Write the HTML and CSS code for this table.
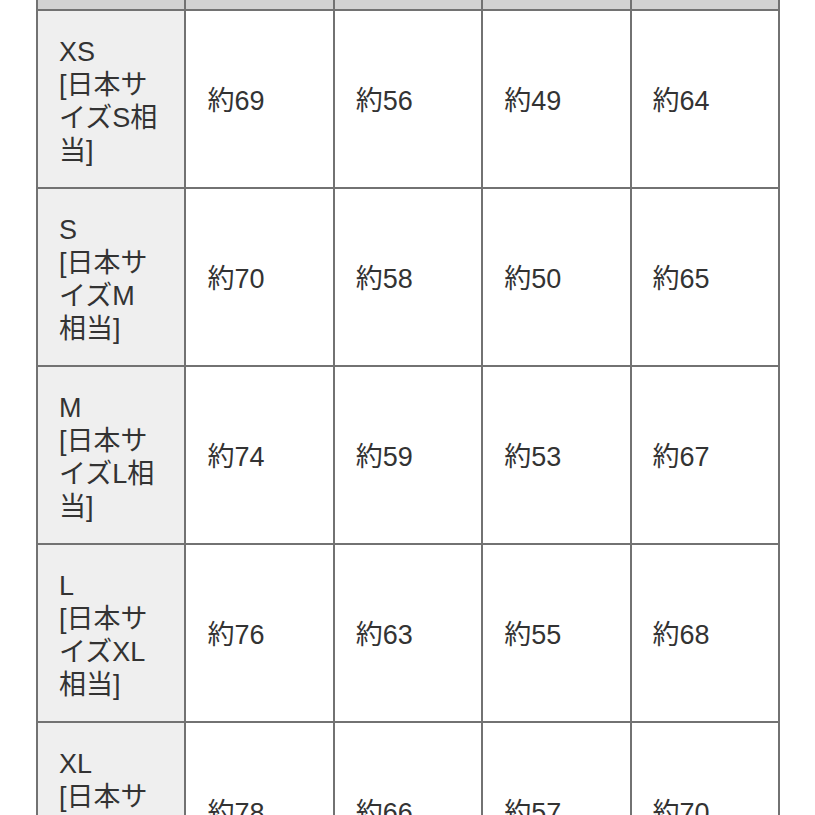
FILE: index.html
```html
<!DOCTYPE html>
<html lang="ja">
<head>
<meta charset="utf-8">
<link rel="stylesheet" href="styles.css">
</head>
<body>
<div class="wrap">
<table class="size">
  <tr class="head"><th></th><th></th><th></th><th></th><th></th></tr>
  <tr><th>XS<br>[日本サイズS相当]</th><td>約69</td><td>約56</td><td>約49</td><td>約64</td></tr>
  <tr><th>S<br>[日本サイズM相当]</th><td>約70</td><td>約58</td><td>約50</td><td>約65</td></tr>
  <tr><th>M<br>[日本サイズL相当]</th><td>約74</td><td>約59</td><td>約53</td><td>約67</td></tr>
  <tr><th>L<br>[日本サイズXL相当]</th><td>約76</td><td>約63</td><td>約55</td><td>約68</td></tr>
  <tr><th>XL<br>[日本サイズ2L相当]</th><td>約78</td><td>約66</td><td>約57</td><td>約70</td></tr>
</table>
</div>
</body>
</html>
```
FILE: styles.css
```css
html, body {
  margin: 0;
  padding: 0;
  background: #ffffff;
}
.wrap {
  padding-left: 36px;
  overflow: hidden;
  height: 815px;
}
.size {
  border-collapse: collapse;
  table-layout: fixed;
  width: 744px;
  margin-top: -2px;
  font-family: "Liberation Sans", "Noto Sans CJK JP", sans-serif;
  font-size: 27px;
  line-height: 33px;
  color: #333333;
}
.size th, .size td {
  border: 2px solid #727272;
  padding: 5px 24px 0 21px;
  height: 171px;
  text-align: left;
  vertical-align: middle;
  font-weight: normal;
}
.size th {
  background: #efefef;
}
.size .head th {
  height: 9px;
  padding: 0;
  background: #d2d2d2;
}
```
